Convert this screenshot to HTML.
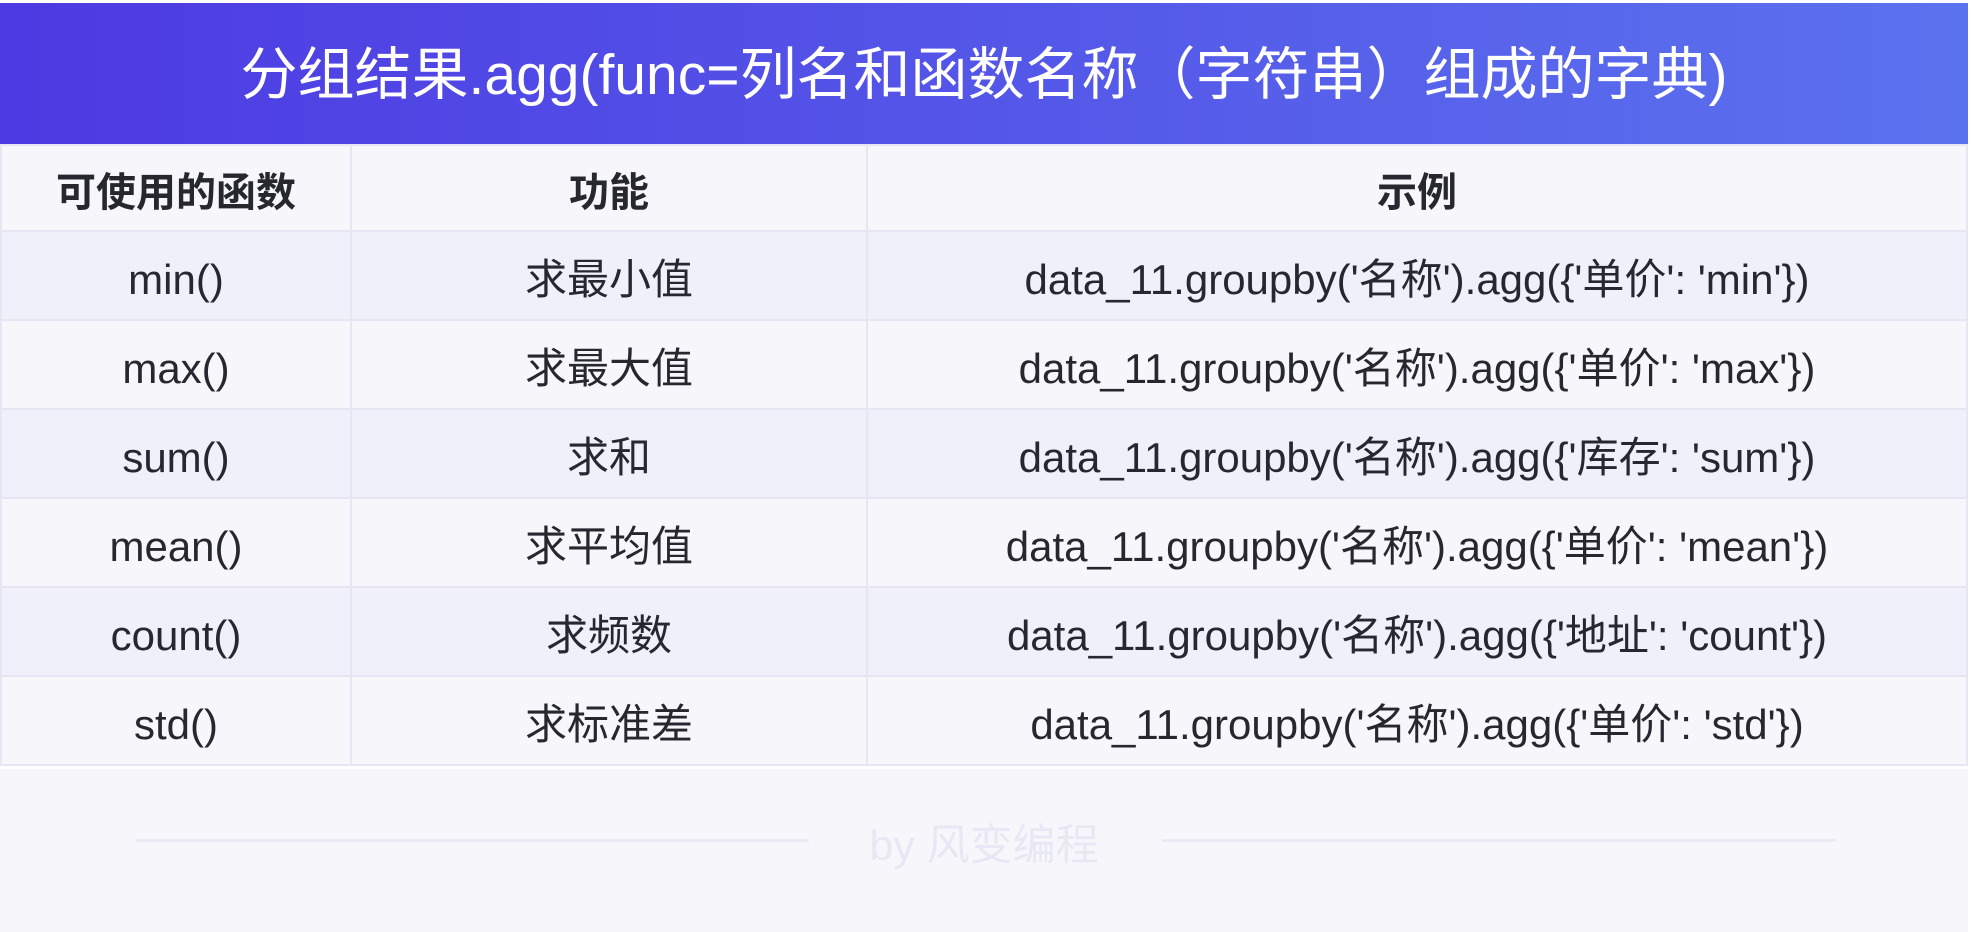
<!DOCTYPE html>
<html><head><meta charset="utf-8"><style>
html,body{margin:0;padding:0;background:#fff;}
body{width:1972px;height:932px;position:relative;overflow:hidden;font-family:"Liberation Sans","Noto Sans CJK SC",sans-serif;}
.hd{position:absolute;left:0;top:3px;width:1968px;height:141px;background:linear-gradient(90deg,#4d3ae2,#5b72ee);color:#fff;font-size:57px;text-align:center;line-height:145px;white-space:nowrap;}
table{position:absolute;left:0;top:144px;width:1968px;border-collapse:collapse;table-layout:fixed;}
td{border:2px solid #e6e6f3;text-align:center;color:#272730;font-size:42px;height:79px;line-height:50px;padding:8px 0 0 0;vertical-align:middle;white-space:nowrap;}
tr.h td{font-weight:bold;font-size:40px;height:74px;padding-top:10px;background:#f7f7fb;}
tr.a td{background:#f0f0fa;}
tr.b td{background:#f7f7fb;}
.ft{position:absolute;left:0;top:769px;width:1968px;height:163px;background:#f7f7fb;}
.ln{position:absolute;top:70px;height:3px;background:#ebebf5;}
.by{position:absolute;left:0;width:1968px;top:50px;text-align:center;font-size:43px;line-height:55px;color:#e8e8f5;}
</style></head><body>
<div class="hd">分组结果.agg(func=列名和函数名称（字符串）组成的字典)</div>
<table>
<colgroup><col style="width:350px"><col style="width:516px"><col></colgroup>
<tr class="h"><td>可使用的函数</td><td>功能</td><td>示例</td></tr>
<tr class="a"><td>min()</td><td>求最小值</td><td>data_11.groupby('名称').agg({'单价': 'min'})</td></tr>
<tr class="b"><td>max()</td><td>求最大值</td><td>data_11.groupby('名称').agg({'单价': 'max'})</td></tr>
<tr class="a"><td>sum()</td><td>求和</td><td>data_11.groupby('名称').agg({'库存': 'sum'})</td></tr>
<tr class="b"><td>mean()</td><td>求平均值</td><td>data_11.groupby('名称').agg({'单价': 'mean'})</td></tr>
<tr class="a"><td>count()</td><td>求频数</td><td>data_11.groupby('名称').agg({'地址': 'count'})</td></tr>
<tr class="b"><td>std()</td><td>求标准差</td><td>data_11.groupby('名称').agg({'单价': 'std'})</td></tr>
</table>
<div class="ft">
<div class="ln" style="left:136px;width:673px"></div>
<div class="ln" style="left:1162px;width:674px"></div>
<div class="by">by 风变编程</div>
</div>
</body></html>
